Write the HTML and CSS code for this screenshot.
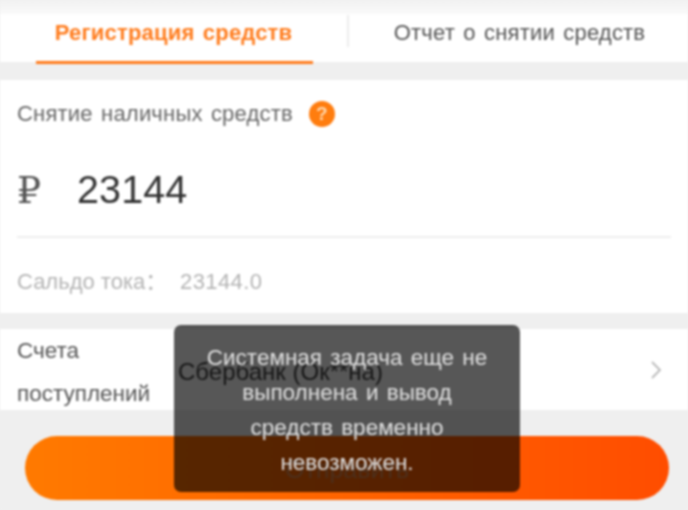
FILE: index.html
```html
<!DOCTYPE html>
<html lang="ru">
<head>
<meta charset="utf-8">
<title>Снятие наличных средств</title>
<link rel="stylesheet" href="styles.css">
</head>
<body>
<div class="page">
  <div class="status"></div>
  <nav class="tabs">
    <div class="tab tab-active"><span class="tab-text">Регистрация средств</span></div>
    <div class="tab-sep"></div>
    <div class="tab"><span class="tab-text">Отчет о снятии средств</span></div>
  </nav>
  <section class="card">
    <div class="title-row">
      <span class="title">Снятие наличных средств</span>
      <span class="help">?</span>
    </div>
    <div class="amount-row">
      <span class="currency">₽</span>
      <span class="amount">23144</span>
    </div>
    <div class="balance"><span class="balance-label">Сальдо тока：</span><span class="balance-value">23144.0</span></div>
  </section>
  <section class="account">
    <div class="account-label">Счета<br>поступлений</div>
    <div class="account-value">Сбербанк (Ок**на)</div>
    <svg class="chevron" width="12" height="20" viewBox="0 0 12 20"><path d="M2 2l8 8-8 8" fill="none" stroke="#b9b9b9" stroke-width="1.8"/></svg>
  </section>
  <div class="submit-wrap"><button class="submit">Отправить</button></div>
  <div class="toast">Системная задача еще не<br>выполнена и вывод<br>средств временно<br>невозможен.</div>
</div>
</body>
</html>
```
FILE: styles.css
```css
* { box-sizing: border-box; }
html, body { margin: 0; padding: 0; background: #efefef; }
.page {
  position: relative;
  width: 688px;
  height: 510px;
  overflow: hidden;
  background: #efefef;
  font-family: "Liberation Sans", "Noto Sans CJK SC", Arial, sans-serif;
  filter: blur(0.8px);
}
.status { height: 14px; background: linear-gradient(#f1f1f1, #fafafa); }
.tabs {
  display: flex;
  align-items: stretch;
  height: 48px;
  background: #fff;
  font-size: 22px;
  letter-spacing: 0.2px;
  color: #555;
  word-spacing: 2px;
}
.tab { position: relative; display: flex; align-items: center; justify-content: center; }
.tab:first-child { width: 347px; }
.tab:last-child { flex: 1; padding-left: 2px; }
.tab-text { margin-top: -10px; }
.tab-active { color: #ff7d1f; font-weight: 700; }
.tab-active::after {
  content: "";
  position: absolute;
  left: 36px;
  width: 277px;
  bottom: -2px;
  height: 3px;
  background: #ff7a1a;
}
.tab-sep { width: 2px; height: 32px; margin-top: 1px; background: #ececec; }
.card { margin-top: 18px; height: 233px; padding: 0 17px; background: #fff; }
.title-row { display: flex; align-items: center; height: 68px; font-size: 22px; letter-spacing: 0.2px; word-spacing: 2px; color: #666; }
.help {
  display: flex;
  align-items: center;
  justify-content: center;
  width: 26px;
  height: 26px;
  margin-left: 16px;
  border-radius: 50%;
  background: #ff7d0f;
  color: #ffd9b0;
  font-size: 19px;
  font-weight: 700;
}
.amount-row {
  display: flex;
  align-items: center;
  height: 90px;
  padding-bottom: 5px;
  border-bottom: 2px solid #eee;
  color: #333;
}
.currency { width: 60px; font-family: "Liberation Serif", "DejaVu Serif", serif; font-size: 38px; color: #555; }
.amount { font-size: 39.5px; letter-spacing: 0.1px; }
.balance { display: flex; align-items: baseline; padding-top: 25px; font-size: 22px; color: #b4b4b4; }
.balance-label { width: 163px; }
.balance-value { letter-spacing: 0.4px; }
.account {
  position: relative;
  display: flex;
  align-items: center;
  height: 81px;
  margin-top: 16px;
  padding: 0 17px;
  background: #fff;
}
.account-label { width: 161px; font-size: 22.5px; line-height: 43px; color: #555; margin-top: 4px; }
.account-value { font-size: 24px; color: #444; margin-top: 4px; }
.chevron { margin-left: auto; margin-right: 9px; margin-top: 0; }
.submit-wrap { padding: 26px 19px 0 25px; }
.submit {
  display: block;
  width: 100%;
  height: 64px;
  border: 0;
  border-radius: 32px;
  background: linear-gradient(90deg, #ff7a00, #ff4d00);
  color: #e08a50;
  font: 25px "Liberation Sans", Arial, sans-serif;
  padding-top: 4px;
}
.toast {
  position: absolute;
  left: 174px;
  top: 325px;
  width: 346px;
  height: 167px;
  padding-top: 15px;
  border-radius: 7px;
  background: rgba(0, 0, 0, 0.66);
  color: #e0e0e0;
  font-size: 22.5px;
  line-height: 35px;
  text-align: center;
  word-spacing: 2px;
}
```
